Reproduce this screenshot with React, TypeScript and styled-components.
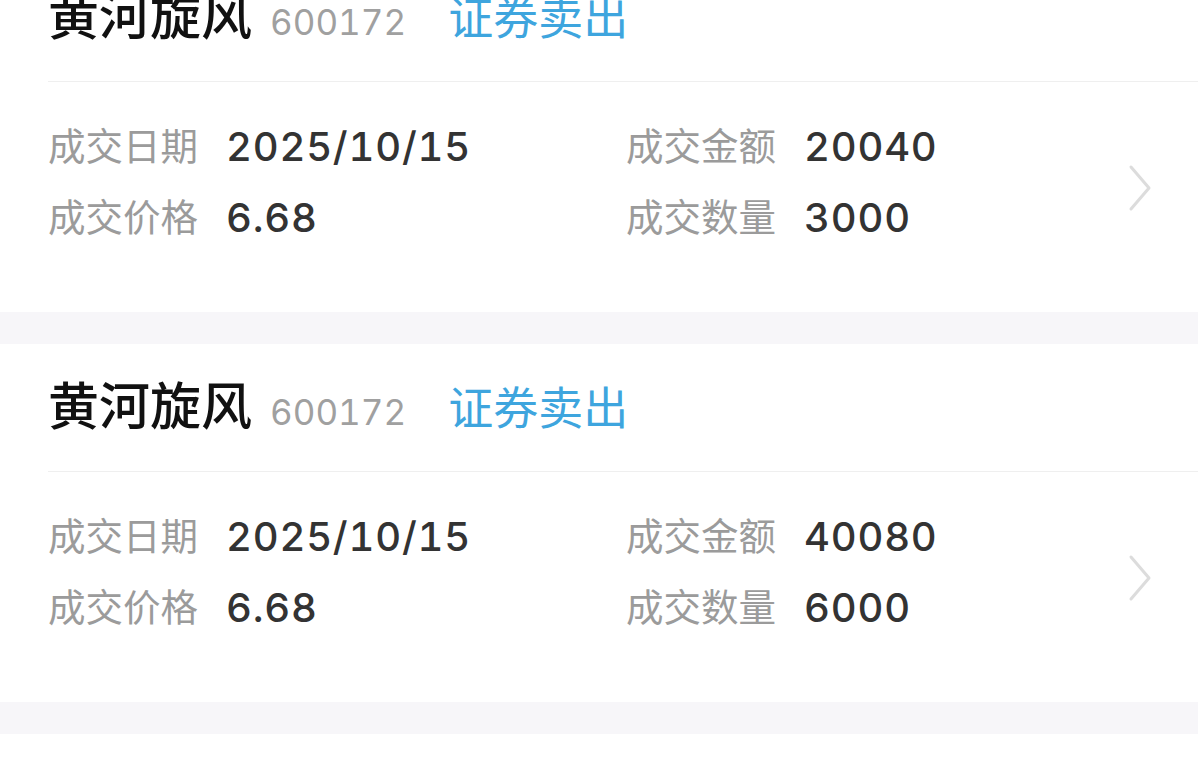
import styled, { createGlobalStyle } from "styled-components";

const GlobalStyle = createGlobalStyle`
  html, body {
    margin: 0;
    padding: 0;
    background: #ffffff;
  }
  body {
    font-family: Inter, "Noto Sans CJK SC", sans-serif;
    overflow: hidden;
  }
`;

const Page = styled.div`
  width: 1198px;
  height: 758px;
  overflow: hidden;
  background: #f7f6f9;
`;

const List = styled.div`
  display: flex;
  flex-direction: column;
  gap: 32px;
  margin-top: -46px;
`;

const Card = styled.div`
  background: #ffffff;
  padding-left: 48px;
  height: 358px;
  box-sizing: border-box;
  display: flex;
  flex-direction: column;
`;

const Header = styled.div`
  height: 128px;
  box-sizing: border-box;
  display: flex;
  align-items: center;
  padding-bottom: 8px;
  border-bottom: 1.5px solid #efefef;
`;

const TitleLine = styled.div`
  display: flex;
  align-items: baseline;
`;

const Name = styled.span`
  font-family: "Noto Sans CJK SC", sans-serif;
  font-size: 51px;
  font-weight: 500;
  line-height: 1;
  color: #111111;
`;

const Code = styled.span`
  font-family: Inter, sans-serif;
  font-size: 35px;
  font-variant-numeric: tabular-nums;
  line-height: 1;
  color: #a0a0a0;
  margin-left: 18px;
`;

const Action = styled.span`
  font-family: "Noto Sans CJK SC", sans-serif;
  font-size: 45px;
  line-height: 1;
  color: #3ea5de;
  margin-left: 42px;
`;

const Body = styled.div`
  display: flex;
  align-items: flex-start;
  padding: 40px 46px 0 0;
`;

const Grid = styled.div`
  flex: 1;
  display: grid;
  grid-template-columns: 578px 1fr;
  row-gap: 21px;
`;

const Cell = styled.div`
  display: flex;
  align-items: center;
  height: 50px;
`;

const Label = styled.span`
  font-family: "Noto Sans CJK SC", sans-serif;
  font-size: 37.5px;
  line-height: 1;
  color: #9b9b9b;
  width: 150px;
  margin: 0 28px 7px 0;
  white-space: nowrap;
`;

const Value = styled.span`
  font-family: Inter, sans-serif;
  font-size: 40px;
  line-height: 1;
  font-weight: 500;
  letter-spacing: 0.8px;
  font-variant-numeric: tabular-nums;
  color: #333333;
`;

const Chevron = styled.svg`
  width: 24px;
  height: 48px;
  margin-top: 42px;
  flex-shrink: 0;
`;

type Trade = {
  date: string;
  price: string;
  amount: string;
  qty: string;
};

const trades: Trade[] = [
  { date: "2025/10/15", price: "6.68", amount: "20040", qty: "3000" },
  { date: "2025/10/15", price: "6.68", amount: "40080", qty: "6000" },
];

function TradeCard({ trade }: { trade: Trade }) {
  return (
    <Card>
      <Header>
        <TitleLine>
          <Name>黄河旋风</Name>
          <Code>600172</Code>
          <Action>证券卖出</Action>
        </TitleLine>
      </Header>
      <Body>
        <Grid>
          <Cell>
            <Label>成交日期</Label>
            <Value>{trade.date}</Value>
          </Cell>
          <Cell>
            <Label>成交金额</Label>
            <Value>{trade.amount}</Value>
          </Cell>
          <Cell>
            <Label>成交价格</Label>
            <Value>{trade.price}</Value>
          </Cell>
          <Cell>
            <Label>成交数量</Label>
            <Value>{trade.qty}</Value>
          </Cell>
        </Grid>
        <Chevron viewBox="0 0 24 48">
          <polyline
            points="3,3 21,24 3,45"
            fill="none"
            stroke="#dcdcdc"
            strokeWidth="3"
            strokeLinecap="round"
            strokeLinejoin="round"
          />
        </Chevron>
      </Body>
    </Card>
  );
}

export default function App() {
  return (
    <>
      <GlobalStyle />
      <Page>
        <List>
          {trades.map((t, i) => (
            <TradeCard key={i} trade={t} />
          ))}
          <Card />
        </List>
      </Page>
    </>
  );
}
